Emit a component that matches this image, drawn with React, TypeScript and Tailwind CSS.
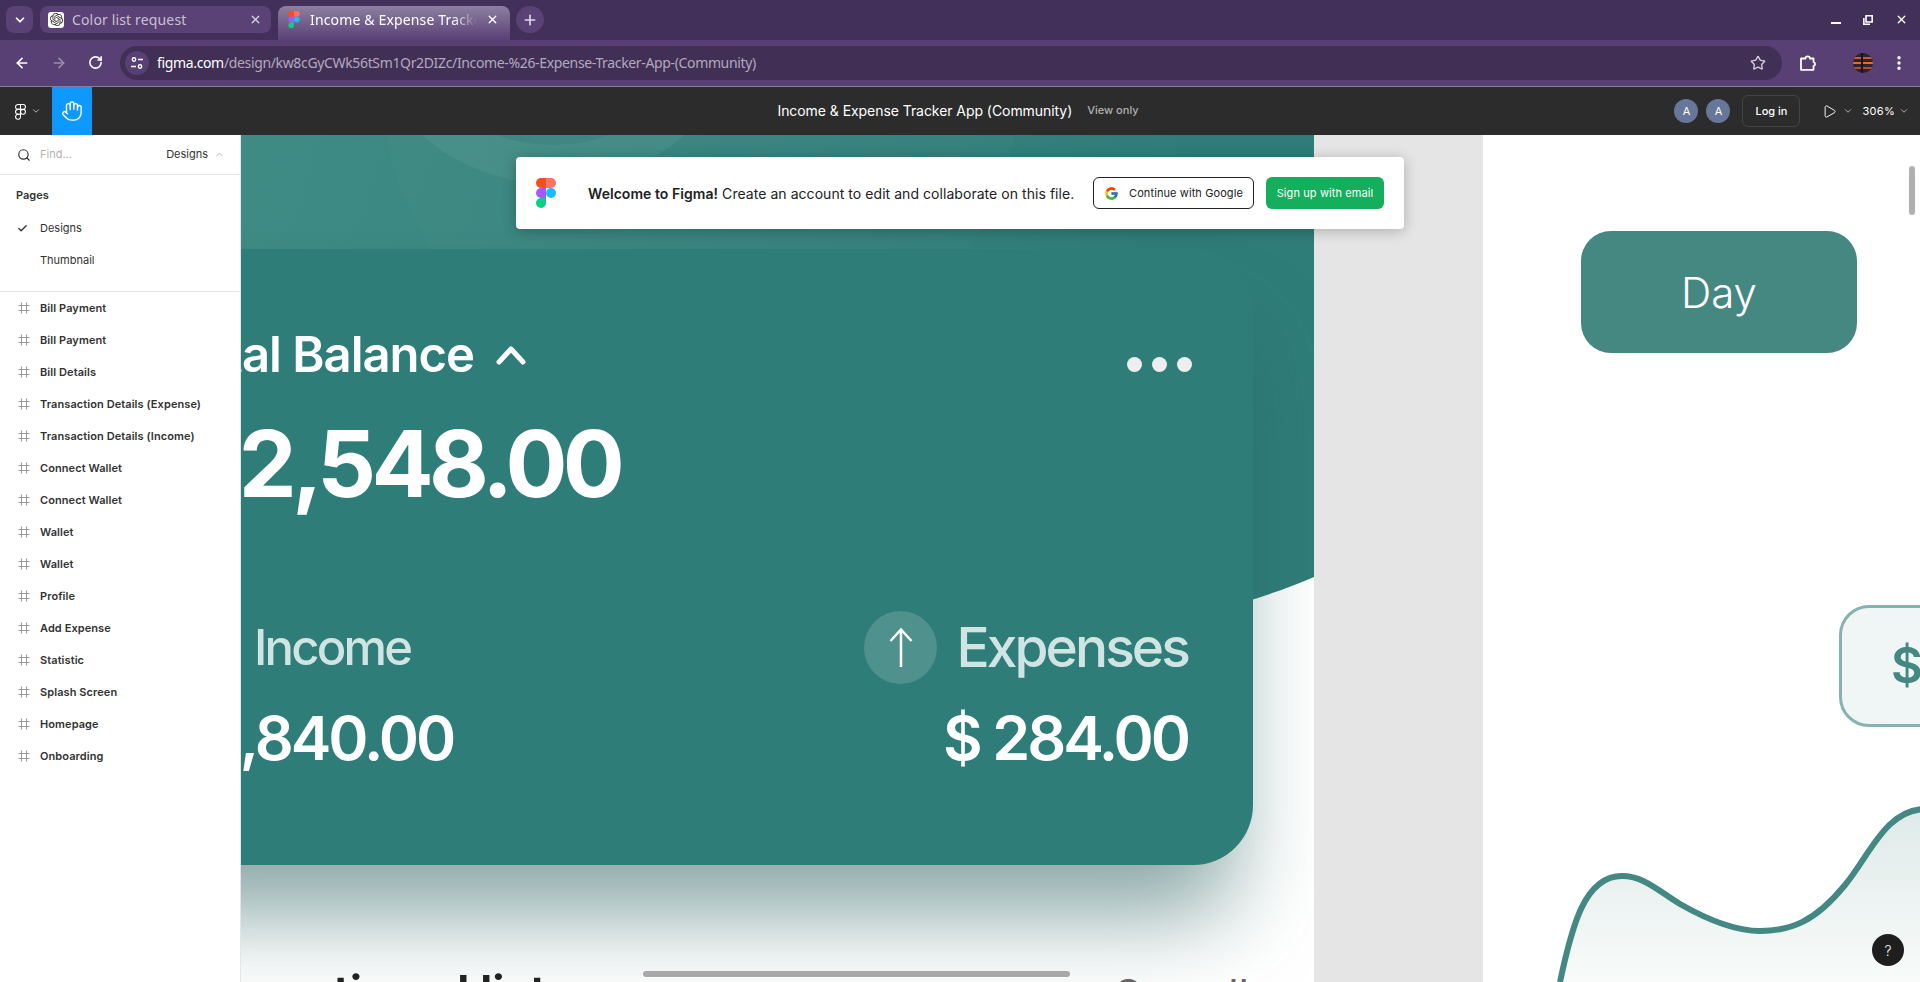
import { ArrowLeft, ArrowRight, Check, ChevronDown, ChevronUp, EllipsisVertical, Figma, Hand, Play, Plus, RotateCw, Search, Star, X } from "lucide-react"
import { FcGoogle } from "react-icons/fc"
import { SiOpenai } from "react-icons/si"

const frames = [
  "Bill Payment",
  "Bill Payment",
  "Bill Details",
  "Transaction Details (Expense)",
  "Transaction Details (Income)",
  "Connect Wallet",
  "Connect Wallet",
  "Wallet",
  "Wallet",
  "Profile",
  "Add Expense",
  "Statistic",
  "Splash Screen",
  "Homepage",
  "Onboarding",
]

function FigmaLogo({ className }: { className?: string }) {
  return (
    <svg className={className} viewBox="0 0 20 30">
      <path fill="#f24e1e" d="M5 0h5v10H5A5 5 0 0 1 5 0z" />
      <path fill="#ff7262" d="M10 0h5a5 5 0 0 1 0 10h-5z" />
      <path fill="#a259ff" d="M5 10h5v10H5a5 5 0 0 1 0-10z" />
      <circle fill="#1abcfe" cx="15" cy="15" r="5" />
      <path fill="#0acf83" d="M5 20h5v5a5 5 0 1 1-5-5z" />
    </svg>
  )
}

function FrameIcon() {
  return (
    <svg className="w-3 h-3 shrink-0 text-[#999]" viewBox="0 0 12 12" fill="none" stroke="currentColor">
      <path d="M3.5 0.5v11M8.5 0.5v11M0.5 3.5h11M0.5 8.5h11" />
    </svg>
  )
}

function TabStrip() {
  return (
    <div className="h-10 flex items-start pt-[6px] pl-[6px] bg-[#43305a] text-[14px] tracking-[0.15px] shrink-0">
      <div className="w-[27px] h-[27px] rounded-lg bg-[#5a4176] flex items-center justify-center text-white">
        <ChevronDown size={14} strokeWidth={3} />
      </div>
      <div className="ml-[7px] w-[231px] h-[27px] rounded-lg bg-[#5a4176] flex items-center pl-2 pr-[9px] text-[#c9c0d3]">
        <div className="w-4 h-4 rounded-[3px] bg-white flex items-center justify-center text-[#333]">
          <SiOpenai size={13} />
        </div>
        <span className="ml-2 flex-1">Color list request</span>
        <X size={13} className="text-[#d8d2df]" strokeWidth={2.5} />
      </div>
      <div className="ml-[7px] w-[232px] h-[34px] rounded-t-lg bg-gradient-to-b from-[#8f7fa1] to-[#5a4176] flex items-center pl-[10px] pr-[11px] pb-[7px] text-white">
        <FigmaLogo className="w-[12px] h-[17px] shrink-0" />
        <span className="ml-[10px] w-[167px] overflow-hidden whitespace-nowrap [mask-image:linear-gradient(to_right,black_85%,transparent)]">Income &amp; Expense Tracker App (Community)</span>
        <X size={13} className="ml-auto text-white" strokeWidth={2.5} />
      </div>
      <div className="ml-[6px] w-[28px] h-[27px] rounded-full bg-[#5a4176] flex items-center justify-center text-[#ddd6e4]">
        <Plus size={16} strokeWidth={2.5} />
      </div>
      <div className="ml-auto flex items-center h-[27px] gap-[22px] pr-[12px] text-white">
        <div className="w-[10px] h-[2px] bg-white mt-[7px]" />
        <svg className="w-[10px] h-[10px]" viewBox="0 0 10 10" fill="none" stroke="currentColor" strokeWidth="1.6">
          <path d="M3 .8h6.2V7H3zM.8 3v6.2H7" />
        </svg>
        <X size={13} strokeWidth={2.5} />
      </div>
    </div>
  )
}

function Toolbar() {
  return (
    <div className="h-[47px] flex items-center bg-[#583f74] border-b border-[#8a7a9c] pl-[14px] pb-px shrink-0 text-white">
      <ArrowLeft size={16} strokeWidth={2.5} />
      <ArrowRight size={16} strokeWidth={2.5} className="ml-[21px] text-[#9a8cab]" />
      <RotateCw size={15} strokeWidth={2.5} className="ml-[21px]" />
      <div className="ml-[17px] w-[1662px] h-[34px] rounded-full bg-[#412f56] flex items-center pl-[5px] pr-[16px]">
        <div className="w-6 h-6 rounded-full bg-[#583f74] flex items-center justify-center">
          <svg className="w-[14px] h-[14px]" viewBox="0 0 14 14" fill="none" stroke="currentColor" strokeWidth="1.4">
            <circle cx="4" cy="3.5" r="1.7" />
            <path d="M8 3.5h5M1 10.5h5" />
            <circle cx="10" cy="10.5" r="1.7" />
          </svg>
        </div>
        <span className="ml-2 text-[14px] tracking-[-0.35px] text-white [font-family:'Noto_Sans',sans-serif]">
          figma.com<span className="text-[#b3a9bf]">/design/kw8cGyCWk56tSm1Qr2DIZc/Income-%26-Expense-Tracker-App-(Community)</span>
        </span>
        <Star size={16} className="ml-auto text-[#d5cfdc]" strokeWidth={2} />
      </div>
      <svg className="ml-[17px] w-[18px] h-[18px]" viewBox="0 0 18 18" fill="none" stroke="currentColor" strokeWidth="1.8" strokeLinejoin="round">
        <path d="M2 4.5h4.5a2.2 2.2 0 0 1 4.4 0h3.6V8a2.2 2.2 0 0 1 0 4.2v3.6H2z" />
      </svg>
      <svg className="ml-[36px] w-5 h-5" viewBox="0 0 20 20">
        <clipPath id="avatar"><circle cx="10" cy="10" r="10" /></clipPath>
        <g clipPath="url(#avatar)">
          <rect width="20" height="20" fill="#2a2430" />
          <rect y="4" width="20" height="2" fill="#d8562a" />
          <rect y="9" width="20" height="2" fill="#e8692c" />
          <rect y="14" width="20" height="2" fill="#c24a28" />
          <rect x="8" width="2" height="20" fill="#17141c" />
        </g>
      </svg>
      <EllipsisVertical size={18} className="ml-[17px]" strokeWidth={2.5} />
    </div>
  )
}

function FigmaBar() {
  return (
    <div className="h-12 grid grid-cols-[1fr_auto_1fr] bg-[#2c2c2c] text-white shrink-0">
      <div className="flex items-center">
        <div className="w-[52px] flex items-center pl-[12px] gap-[2px]">
          <Figma size={17} strokeWidth={1.5} />
          <ChevronDown size={10} className="text-[#ccc]" />
        </div>
        <div className="w-10 h-full bg-[#0d99ff] flex items-center justify-center">
          <Hand size={22} strokeWidth={1.5} />
        </div>
      </div>
      <div className="flex items-center gap-[15px] -translate-x-[2px] pb-px">
        <span className="text-[14px] tracking-[-0.06px]">Income &amp; Expense Tracker App (Community)</span>
        <span className="text-[11px] font-medium text-[#b3b3b3]">View only</span>
      </div>
      <div className="flex items-center justify-end pr-[11px]">
        <div className="w-6 h-6 rounded-full bg-[#667799] flex items-center justify-center text-[11px]">A</div>
        <div className="ml-2 w-6 h-6 rounded-full bg-[#667799] flex items-center justify-center text-[11px]">A</div>
        <div className="ml-3 w-[58px] h-8 rounded-md border border-[#444] flex items-center justify-center text-[11px] font-medium">Log in</div>
        <Play size={15} strokeWidth={1.5} className="ml-[22px]" />
        <ChevronDown size={10} className="ml-[6px] text-[#ccc]" />
        <span className="ml-[9px] text-[11px] tracking-[0.3px]">306%</span>
        <ChevronDown size={10} className="ml-[4px] text-[#ccc]" />
      </div>
    </div>
  )
}

function Sidebar() {
  return (
    <aside className="w-[241px] h-full bg-white border-r border-[#e5e5e5] relative z-10 shrink-0 text-[11px] text-[#333]">
      <div className="h-10 flex items-center border-b border-[#e5e5e5] pl-[17px] pr-[15px]">
        <Search size={14} strokeWidth={2} className="text-[#333]" />
        <span className="ml-[9px] text-[#b3b3b3]">Find...</span>
        <span className="ml-auto">Designs</span>
        <ChevronUp size={11} className="ml-[6px] text-[#b3b3b3]" />
      </div>
      <div className="h-[117px] border-b border-[#e5e5e5]">
        <div className="h-[37px] pl-4 flex items-end pb-[9px] font-semibold">Pages</div>
        <div className="h-8 flex items-center">
          <Check size={11} strokeWidth={3} className="ml-[17px] text-[#333]" />
          <span className="ml-3">Designs</span>
        </div>
        <div className="h-8 flex items-center pl-10">Thumbnail</div>
      </div>
      <ul>
        {frames.map((name, i) => (
          <li key={i} className="h-8 flex items-center pl-[18px] gap-[10px] font-semibold tracking-[0.08px]">
            <FrameIcon />
            {name}
          </li>
        ))}
      </ul>
    </aside>
  )
}

function BalanceCard() {
  return (
    <div className="absolute left-[108px] top-[114px] w-[1145px] h-[616px] rounded-[60px] bg-[#2f7d78] shadow-[0_70px_90px_-20px_rgba(40,95,92,0.55)] pl-[61px] pr-[65px] pt-[76px]">
      <div className="flex items-center justify-between h-[60px]">
        <div className="flex items-center gap-[22px]">
          <span className="text-[49px] font-semibold text-white tracking-[-1px]">Total Balance</span>
          <svg className="w-[30px] h-[20px]" viewBox="0 0 30 20" fill="none" stroke="white" strokeWidth="5" strokeLinecap="round" strokeLinejoin="round">
            <path d="M3 17 15 4l12 13" />
          </svg>
        </div>
        <div className="flex gap-[10px] mt-[19px] -mr-[4px]">
          <div className="w-[15px] h-[15px] rounded-full bg-[#eee]" />
          <div className="w-[15px] h-[15px] rounded-full bg-[#eee]" />
          <div className="w-[15px] h-[15px] rounded-full bg-[#eee]" />
        </div>
      </div>
      <div className="mt-[23px] -ml-[3px] text-[92px] leading-[112px] font-bold text-white tracking-[-4.7px]">$ 2,548.00</div>
      <div className="mt-[91px] flex justify-between">
        <div className="flex flex-col items-start">
          <div className="h-[73px] flex items-center -ml-[12px] gap-[24px]">
            <div className="w-[73px] h-[73px] rounded-full bg-[#4f918d]" />
            <span className="text-[49px] font-medium text-[#d0e5e3] tracking-[-2.8px]">Income</span>
          </div>
          <div className="mt-[17px] -ml-px text-[61px] leading-[74px] font-semibold text-white tracking-[-3px]">$ 1,840.00</div>
        </div>
        <div className="flex flex-col items-end">
          <div className="h-[73px] flex items-center gap-[19px]">
            <div className="w-[73px] h-[73px] rounded-full bg-[#4f918d] flex items-center justify-center">
              <svg className="w-6 h-[40px]" viewBox="0 0 24 40" fill="none" stroke="white" strokeWidth="2.5">
                <path d="M12 1v38M1.5 13 12 1.5 22.5 13" />
              </svg>
            </div>
            <span className="text-[55px] font-medium text-[#d0e5e3] tracking-[-2.9px]">Expenses</span>
          </div>
          <div className="mt-[17px] text-[61px] leading-[74px] font-semibold text-white tracking-[-3px]">$ 284.00</div>
        </div>
      </div>
    </div>
  )
}

function Canvas() {
  return (
    <div className="relative flex-1 h-full bg-[#e5e5e5] overflow-hidden">
      {/* frame 1, runs on under the sidebar */}
      <div className="absolute left-[-241px] top-0 w-[1314px] h-full bg-white overflow-hidden">
        <svg className="absolute left-0 top-0 w-[1314px] h-[520px]" viewBox="0 0 1314 520">
          <defs>
            <linearGradient id="head" x1="0" y1="0" x2="1" y2="0.1">
              <stop offset="0.15" stopColor="#408c85" />
              <stop offset="0.9" stopColor="#2f7d78" />
            </linearGradient>
          </defs>
          <path fill="url(#head)" d="M0 0H1314V442C1180 500 1000 510 800 510H0z" />
          <circle cx="553" cy="-152" r="201" fill="white" opacity="0.05" />
          <circle cx="553" cy="-152" r="162" fill="#3a8780" />
          <circle cx="700" cy="-60" r="320" fill="white" opacity="0.015" />
        </svg>
        <BalanceCard />
        <div className="absolute left-[150px] right-[65px] top-[826px] flex justify-between items-start">
          <span className="text-[49px] leading-[66px] font-semibold text-[#222] tracking-[-1px]">Transactions History</span>
          <span className="text-[43px] leading-[66px] text-[#666]">See all</span>
        </div>
      </div>

      {/* frame 2 */}
      <div className="absolute left-[1242px] top-0 w-[437px] h-full bg-white overflow-hidden">
        <div className="absolute left-[98px] top-[96px] w-[276px] h-[122px] rounded-[30px] bg-[#458781] flex items-center justify-center text-[42px] font-light text-white">Day</div>
        <div className="absolute left-[356px] top-[470px] w-[276px] h-[122px] rounded-[30px] bg-[#f0f6f5] border-[3px] border-[#86b3af] flex items-center pl-[49px] text-[49px] font-semibold text-[#438883]">$</div>
        <svg className="absolute left-0 top-[660px] w-[437px] h-[187px]" viewBox="1483 795 437 187">
          <defs>
            <linearGradient id="area" x1="0" y1="0" x2="0" y2="1">
              <stop offset="0" stopColor="#dfeae8" />
              <stop offset="1" stopColor="#f8fbfa" />
            </linearGradient>
          </defs>
          <path fill="url(#area)" d="M1560 982C1572 925 1585 876 1622 876C1644 876 1660 892 1680 904C1708 920 1735 931 1760 931C1790 931 1815 922 1845 885C1870 855 1885 810 1925 809V982z" />
          <path fill="none" stroke="#438883" strokeWidth="6" d="M1560 982C1572 925 1585 876 1622 876C1644 876 1660 892 1680 904C1708 920 1735 931 1760 931C1790 931 1815 922 1845 885C1870 855 1885 810 1925 809" />
        </svg>
      </div>

      {/* overlays */}
      <div className="absolute left-[275px] top-[22px] w-[888px] h-[72px] rounded bg-white shadow-[0_2px_14px_rgba(0,0,0,0.25)] flex items-center pl-5 pr-5 text-[14px] text-[#222]">
        <FigmaLogo className="w-5 h-[30px] shrink-0" />
        <p className="ml-8 tracking-[0.05px]"><span className="font-semibold">Welcome to Figma!</span> Create an account to edit and collaborate on this file.</p>
        <div className="ml-auto w-[161px] h-8 rounded-md border border-[#222] flex items-center justify-center gap-[10px] text-[11px] tracking-[0.1px]">
          <FcGoogle size={15} />
          Continue with Google
        </div>
        <div className="ml-3 w-[118px] h-8 rounded-md bg-[#14ae5c] flex items-center justify-center text-[11px] tracking-[0.1px] text-white">Sign up with email</div>
      </div>
      <div className="absolute left-[402px] top-[836px] w-[427px] h-[6px] rounded-full bg-[#a8a8a8]" />
      <div className="absolute left-[1668px] top-[31px] w-[6px] h-[49px] rounded-full bg-[#b0b0b0]" />
      <div className="absolute left-[1631px] top-[799px] w-8 h-8 rounded-full bg-[#1e1e1e] flex items-center justify-center text-[14px] font-light text-white">?</div>
    </div>
  )
}

export default function App() {
  return (
    <div className="h-screen w-full flex flex-col overflow-hidden [font-family:Inter,sans-serif]">
      <div className="[font-family:'Noto_Sans',sans-serif]">
        <TabStrip />
      </div>
      <Toolbar />
      <FigmaBar />
      <main className="flex flex-1 min-h-0">
        <Sidebar />
        <Canvas />
      </main>
    </div>
  )
}
